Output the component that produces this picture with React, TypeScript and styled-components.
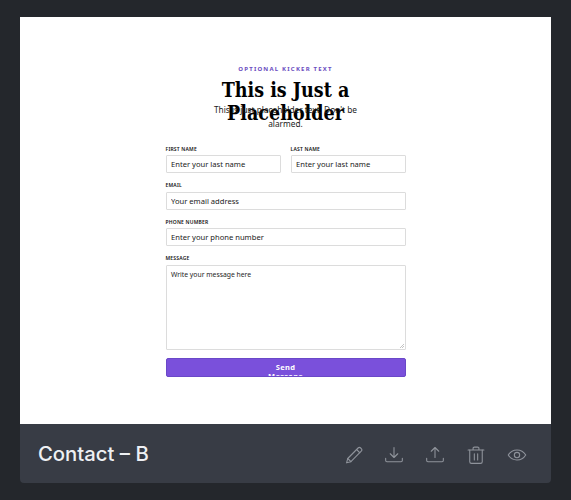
import React from "react";
import styled, { createGlobalStyle } from "styled-components";

const GlobalStyle = createGlobalStyle`
  html, body {
    margin: 0;
    padding: 0;
    background: #24272c;
  }
`;

const App = () => {
  return (
    <Page>
      <GlobalStyle />
      <Preview>
        <Header>
          <Kicker>Optional kicker text</Kicker>
          <Title>This is Just a Placeholder</Title>
          <Subtitle>This is just placeholder text. Don't be alarmed.</Subtitle>
        </Header>
        <Form>
          <NameRow>
            <Field>
              <Label>First name</Label>
              <Input placeholder="Enter your last name" />
            </Field>
            <Field>
              <Label>Last name</Label>
              <Input placeholder="Enter your last name" />
            </Field>
          </NameRow>
          <Field>
            <Label>Email</Label>
            <Input placeholder="Your email address" />
          </Field>
          <Field>
            <Label>Phone number</Label>
            <Input placeholder="Enter your phone number" />
          </Field>
          <Field>
            <Label>Message</Label>
            <TextArea placeholder="Write your message here" />
          </Field>
          <SendButton type="button">
            <SendLabel>Send Message</SendLabel>
          </SendButton>
        </Form>
      </Preview>
      <Footer>
        <FooterTitle>Contact – B</FooterTitle>
        <Actions>
          <ActionIcon viewBox="0 0 24 24">
            <path d="M5.700 16.200 18.100 3.600a2.200 2.200 0 0 1 3.100 0l.7.7a2.200 2.200 0 0 1 0 3.100L9.500 20l-5.200 1.400z" />
            <path d="m16.300 5.400 3.900 3.900M5.700 16.200 9.500 20" />
          </ActionIcon>
          <ActionIcon viewBox="0 0 24 24">
            <path d="M12 3v12M7.500 10.500 12 15l4.500-4.500" />
            <path d="M2 16v2.500a1.500 1.500 0 0 0 1.500 1.500h17a1.500 1.500 0 0 0 1.500-1.500V16" />
          </ActionIcon>
          <ActionIcon viewBox="0 0 24 24">
            <path d="M12 15V3M7.500 7.500 12 3l4.500 4.500" />
            <path d="M2 16v2.500a1.500 1.500 0 0 0 1.500 1.500h17a1.500 1.500 0 0 0 1.500-1.500V16" />
          </ActionIcon>
          <ActionIcon viewBox="0 0 24 24">
            <path d="M2.500 6h19M8.500 6V4a1.500 1.500 0 0 1 1.500-1.500h4A1.500 1.500 0 0 1 15.500 4v2" />
            <path d="M4.500 6v14a2 2 0 0 0 2 2h11a2 2 0 0 0 2-2V6" />
            <path d="M10 10.500v7.500M14 10.500v7.500" />
          </ActionIcon>
          <ActionIcon viewBox="0 0 24 24">
            <path d="M1.500 12C4 8 7.500 6 12 6s8 2 10.500 6c-2.500 4-6 6-10.500 6s-8-2-10.500-6z" />
            <circle cx="12" cy="12" r="3.200" />
          </ActionIcon>
        </Actions>
      </Footer>
    </Page>
  );
};

export default App;

const Page = styled.div`
  width: 571px;
  height: 500px;
  box-sizing: border-box;
  padding: 17px 20px 17px;
  overflow: hidden;
  display: flex;
  flex-direction: column;
`;

const Preview = styled.div`
  height: 407px;
  flex: none;
  background: #ffffff;
  display: flex;
  flex-direction: column;
  align-items: center;
  padding-top: 48px;
  box-sizing: border-box;
`;

const Header = styled.div`
  width: 160px;
  display: flex;
  flex-direction: column;
  align-items: center;
  text-align: center;
`;

const Kicker = styled.div`
  font-family: "Noto Sans", sans-serif;
  font-size: 6px;
  line-height: 8px;
  font-weight: 700;
  letter-spacing: 1.2px;
  text-transform: uppercase;
  color: #6a4cc0;
  white-space: nowrap;
  margin-bottom: 6px;
`;

const Title = styled.h1`
  margin: 0;
  height: 24px;
  font-family: "DejaVu Serif", serif;
  font-size: 19.500px;
  font-stretch: condensed;
  line-height: 23px;
  font-weight: 700;
  color: #000000;
`;

const Subtitle = styled.p`
  margin: 0;
  font-family: "Noto Sans", sans-serif;
  font-size: 8.300px;
  line-height: 14px;
  color: #1b1b1b;
`;

const Form = styled.form`
  width: 240px;
  margin-top: 13.800px;
  display: flex;
  flex-direction: column;
  gap: 8px;
`;

const NameRow = styled.div`
  display: grid;
  grid-template-columns: 115px 115px;
  column-gap: 10px;
`;

const Field = styled.div`
  display: flex;
  flex-direction: column;
  gap: 2.500px;
`;

const Label = styled.label`
  font-family: "Noto Sans", sans-serif;
  font-size: 5px;
  line-height: 8px;
  font-weight: 600;
  letter-spacing: 0.2px;
  text-transform: uppercase;
  color: #111111;
`;

const Input = styled.input`
  width: 100%;
  height: 18px;
  box-sizing: border-box;
  margin: 0;
  padding: 0 4.500px;
  border: 1px solid #dcdcdc;
  border-radius: 1px;
  background: #ffffff;
  font-family: "Noto Sans", sans-serif;
  font-size: 7.600px;
  outline: none;

  &::placeholder {
    color: #222222;
    opacity: 1;
  }
`;

const TextArea = styled.textarea`
  width: 100%;
  height: 85px;
  box-sizing: border-box;
  display: block;
  margin: 0;
  padding: 4px 4.500px;
  border: 1px solid #dcdcdc;
  border-radius: 1px;
  background: linear-gradient(135deg, transparent 0 60%, #c4c4c4 60% 68%, transparent 68% 82%, #c4c4c4 82% 90%, transparent 90%)
    no-repeat right 1px bottom 1px / 6px 6px #ffffff;
  font-family: "Noto Sans", sans-serif;
  font-size: 6.800px;
  outline: none;
  resize: none;

  &::placeholder {
    color: #222222;
    opacity: 1;
  }
`;

const SendButton = styled.button`
  height: 19px;
  margin: 0;
  padding: 0;
  border: 1px solid #6a48c8;
  border-radius: 2px;
  background: #7a50db;
  overflow: hidden;
  display: block;
`;

const SendLabel = styled.span`
  display: block;
  width: 40px;
  margin: 4px auto 0;
  font-family: "Noto Sans", sans-serif;
  font-size: 7.500px;
  line-height: 9px;
  font-weight: 700;
  letter-spacing: 0.3px;
  text-align: center;
  color: #ffffff;
`;

const Footer = styled.div`
  height: 59px;
  flex: none;
  box-sizing: border-box;
  padding: 0 24px 0 18px;
  background: #383c45;
  border-radius: 0 0 4px 4px;
  display: flex;
  align-items: center;
  justify-content: space-between;
`;

const FooterTitle = styled.div`
  font-family: Inter, sans-serif;
  font-size: 20.300px;
  font-weight: 500;
  color: #eef0f3;
`;

const Actions = styled.div`
  display: flex;
  align-items: center;
  gap: 21px;
  margin-top: 2px;
`;

const ActionIcon = styled.svg`
  width: 20px;
  height: 20px;
  fill: none;
  stroke: #8f939b;
  stroke-width: 1.300;
  stroke-linecap: round;
  stroke-linejoin: round;
`;
